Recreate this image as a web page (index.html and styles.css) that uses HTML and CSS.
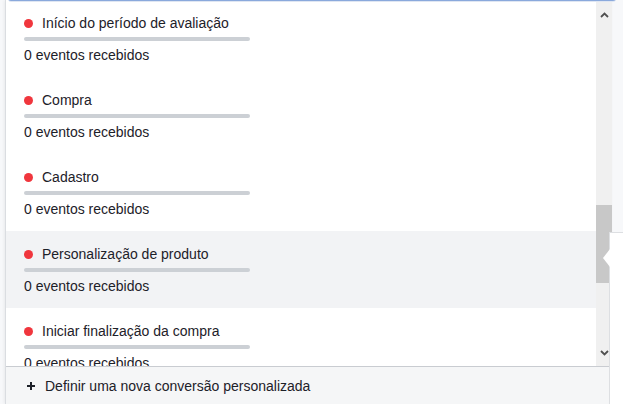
FILE: index.html
```html
<!DOCTYPE html>
<html>
<head>
<meta charset="utf-8">
<link rel="stylesheet" href="styles.css">
</head>
<body>
<div class="input-edge"></div>
<div class="panel">
  <div class="main">
    <div class="list">
      <div class="item">
        <div class="title"><span class="dot"></span><span>Início do período de avaliação</span></div>
        <div class="bar"></div>
        <div class="sub">0 eventos recebidos</div>
      </div>
      <div class="item">
        <div class="title"><span class="dot"></span><span>Compra</span></div>
        <div class="bar"></div>
        <div class="sub">0 eventos recebidos</div>
      </div>
      <div class="item">
        <div class="title"><span class="dot"></span><span>Cadastro</span></div>
        <div class="bar"></div>
        <div class="sub">0 eventos recebidos</div>
      </div>
      <div class="item hover">
        <div class="title"><span class="dot"></span><span>Personalização de produto</span></div>
        <div class="bar"></div>
        <div class="sub">0 eventos recebidos</div>
      </div>
      <div class="item">
        <div class="title"><span class="dot"></span><span>Iniciar finalização da compra</span></div>
        <div class="bar"></div>
        <div class="sub">0 eventos recebidos</div>
      </div>
    </div>
    <div class="scrollbar">
      <div class="sb-btn up">
        <svg width="9" height="6" viewBox="0 0 9 6"><path d="M1 5 L4.5 1.5 L8 5" fill="none" stroke="#505050" stroke-width="1.8"/></svg>
      </div>
      <div class="sb-track"><div class="sb-thumb"></div></div>
      <div class="sb-btn down">
        <svg width="9" height="6" viewBox="0 0 9 6"><path d="M1 1 L4.5 4.5 L8 1" fill="none" stroke="#505050" stroke-width="1.8"/></svg>
      </div>
    </div>
  </div>
  <div class="footer">
    <svg class="plus" width="8" height="8" viewBox="0 0 8 8"><path d="M4 0 V8 M0 4 H8" stroke="#1d2129" stroke-width="2"/></svg>
    <span>Definir uma nova conversão personalizada</span>
  </div>
</div>
<div class="tooltip"><div class="arrow"></div></div>
</body>
</html>
```
FILE: styles.css
```css
html, body {
  margin: 0;
  padding: 0;
}
body {
  width: 623px;
  height: 404px;
  overflow: hidden;
  position: relative;
  background: #f7f8fa;
  font-family: "Liberation Sans", Arial, sans-serif;
  font-size: 14px;
  color: #1d2129;
}
.input-edge {
  position: absolute;
  top: -6px;
  left: 8px;
  width: 606px;
  height: 6px;
  border: 1px solid #8aa9dc;
  border-top: none;
  border-radius: 0 0 3px 3px;
  box-shadow: 0 1px 0 #dfe6f2;
  z-index: 3;
}
.panel {
  margin-left: 5px;
  width: 607px;
  height: 404px;
  background: #fff;
  border-left: 1px solid #dadde1;
  box-shadow: -1px 0 3px rgba(0,0,0,0.06);
  display: flex;
  flex-direction: column;
  box-sizing: border-box;
}
.main {
  height: 366px;
  display: flex;
  overflow: hidden;
}
.list {
  flex: 1;
  overflow: hidden;
}
.item {
  height: 77px;
  box-sizing: border-box;
  padding: 14px 0 0 18px;
}
.item.hover {
  background: #f2f3f5;
}
.title {
  display: flex;
  align-items: center;
  height: 18px;
  line-height: 18px;
}
.dot {
  width: 9px;
  height: 9px;
  border-radius: 50%;
  background: #f0363d;
  margin-right: 9px;
  flex: none;
}
.bar {
  width: 226px;
  height: 4px;
  border-radius: 2px;
  background: #ccd0d5;
  margin-top: 5px;
}
.sub {
  margin-top: 5px;
  height: 18px;
  line-height: 18px;
}
.scrollbar {
  width: 16px;
  background: #f0f0f0;
  display: flex;
  flex-direction: column;
}
.sb-btn {
  display: flex;
  align-items: center;
  justify-content: center;
}
.sb-btn.up { height: 29px; }
.sb-btn.down { height: 26px; }
.sb-track {
  flex: 1;
}
.sb-thumb {
  margin-top: 176px;
  height: 78px;
  background: #c8c8c8;
}
.footer {
  height: 38px;
  box-sizing: border-box;
  border-top: 1px solid #c9ccd1;
  background: #f5f6f7;
  display: flex;
  align-items: center;
  padding-left: 21px;
  width: 605px;
}
.plus {
  margin-right: 10px;
  flex: none;
}
.tooltip {
  position: absolute;
  left: 609px;
  top: 232px;
  width: 30px;
  height: 180px;
  background: #fff;
  border: 1px solid #dddfe2;
  z-index: 4;
}
.arrow {
  position: absolute;
  left: -7px;
  top: 16px;
  width: 0;
  height: 0;
  border-top: 9px solid transparent;
  border-bottom: 9px solid transparent;
  border-right: 7px solid #fff;
}
```
